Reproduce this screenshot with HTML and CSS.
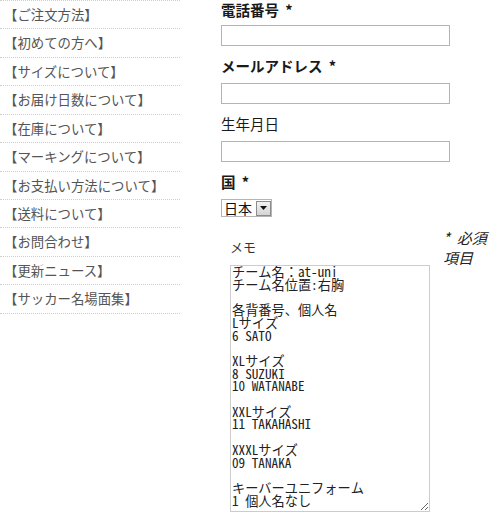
FILE: index.html
```html
<!DOCTYPE html>
<html lang="ja">
<head>
<meta charset="utf-8">
<title>注文フォーム</title>
<link rel="stylesheet" href="styles.css">
</head>
<body>
<div class="page">
  <ul class="nav">
    <li>【ご注文方法】</li>
    <li>【初めての方へ】</li>
    <li>【サイズについて】</li>
    <li>【お届け日数について】</li>
    <li>【在庫について】</li>
    <li>【マーキングについて】</li>
    <li>【お支払い方法について】</li>
    <li>【送料について】</li>
    <li>【お問合わせ】</li>
    <li>【更新ニュース】</li>
    <li>【サッカー名場面集】</li>
  </ul>
  <form class="form">
    <div class="label">電話番号 <span class="req">*</span></div>
    <input class="field" type="text">
    <div class="label">メールアドレス <span class="req">*</span></div>
    <input class="field" type="text">
    <div class="label plain">生年月日</div>
    <input class="field" type="text">
    <div class="label">国 <span class="req">*</span></div>
    <div class="select">
      <select class="select-native"><option>日本</option></select>
      <span class="select-btn"><svg width="7" height="4" viewBox="0 0 7 4"><path d="M0 0H7L3.5 4Z" fill="#111"/></svg></span>
    </div>
    <div class="memo-row">
      <div class="memo">
        <div class="memo-label">メモ</div>
        <textarea class="memo-text">チーム名：at-uni
チーム名位置:右胸

各背番号、個人名
Lサイズ
6 SATO

XLサイズ
8 SUZUKI
10 WATANABE

XXLサイズ
11 TAKAHASHI

XXXLサイズ
09 TANAKA

キーバーユニフォーム
1 個人名なし</textarea>
      </div>
      <div class="note">*&nbsp;&nbsp;必須項目</div>
    </div>
  </form>
</div>
</body>
</html>
```

FILE: styles.css
```css
body {
  margin: 0;
  background: #fff;
  font-family: "Noto Sans CJK JP", "Liberation Sans", sans-serif;
  color: #222;
}

.page {
  display: flex;
  align-items: flex-start;
}

.nav {
  width: 180px;
  list-style: none;
  margin: 0;
  padding: 0;
  border-top: 1px dotted #cfcfcf;
}

.nav li {
  height: 27.43px;
  line-height: 27.43px;
  padding-left: 4px;
  border-bottom: 1px dotted #cfcfcf;
  font-size: 13.4px;
  color: #555;
  white-space: nowrap;
}

.form {
  margin: 0 0 0 41px;
  width: 279px;
}

.label {
  line-height: 20px;
  font-size: 14.5px;
  font-weight: bold;
  margin-bottom: 5px;
  color: #1a1a1a;
}

.label.plain {
  font-weight: normal;
}

.req {
  margin-left: 3px;
}

.field {
  display: block;
  box-sizing: border-box;
  width: 229px;
  height: 21px;
  margin: 0 0 12px;
  padding: 0 2px;
  border: 1px solid #b4b4b4;
  background: #fff;
}

.form .label ~ .label {
  margin-top: -2px;
  margin-bottom: 7px;
}

.select {
  display: flex;
  align-items: center;
  box-sizing: border-box;
  width: 51px;
  height: 18px;
  border: 1px solid #b4b4b4;
  margin-bottom: 11px;
  background: #fff;
}

.select-native {
  appearance: none;
  -webkit-appearance: none;
  border: none;
  background: transparent;
  width: 34px;
  height: 16px;
  padding: 0 0 0 2px;
  margin: 0;
  font-family: "Noto Sans CJK JP", sans-serif;
  font-size: 14px;
  line-height: 16px;
  color: #111;
  outline: none;
}

.select-btn {
  display: flex;
  align-items: center;
  justify-content: center;
  box-sizing: border-box;
  width: 15px;
  height: 15px;
  margin-left: auto;
  border: 1px solid #8c8c8c;
  background: linear-gradient(#f2f2f2, #d4d4d4);
}

.memo-row {
  display: flex;
  align-items: flex-start;
}

.memo {
  margin-left: 9px;
  padding-top: 9px;
}

.memo-label {
  line-height: 20px;
  font-size: 13px;
  margin-bottom: 8px;
  color: #333;
}

.memo-text {
  display: block;
  box-sizing: border-box;
  width: 200px;
  height: 247px;
  margin: 0;
  padding: 0 1px;
  border: 1px solid #cccccc;
  font-family: "Noto Sans Mono CJK JP", "Noto Sans CJK JP", monospace;
  font-size: 13.2px;
  line-height: 12.7px;
  color: #222;
  overflow: hidden;
  resize: both;
}

.note {
  margin-left: 13px;
  width: 50px;
  font-size: 15px;
  line-height: 20px;
  font-style: italic;
  color: #222;
}
```
